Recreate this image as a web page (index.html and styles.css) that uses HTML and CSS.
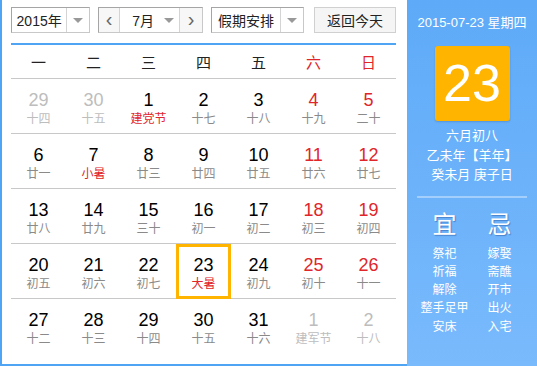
FILE: index.html
```html
<!DOCTYPE html>
<html lang="zh-CN">

<head>
    <meta charset="UTF-8">
    <title>万年历</title>
    <link rel="stylesheet" href="styles.css">
</head>

<body>
    <div class="calendar">
        <div class="cal-main">
            <div class="toolbar">
                <div class="select year-select">
                    <span class="select-text">2015年</span>
                    <span class="select-arrow"><i class="tri"></i></span>
                </div>
                <div class="select month-select">
                    <span class="nav-btn">&lsaquo;</span>
                    <span class="select-text">7月</span>
                    <span class="month-arrow"><i class="tri"></i></span>
                    <span class="nav-btn nav-next">&rsaquo;</span>
                </div>
                <div class="select holiday-select">
                    <span class="select-text">假期安排</span>
                    <span class="select-arrow"><i class="tri"></i></span>
                </div>
                <button class="today-btn">返回今天</button>
            </div>

            <div class="week-head">
                <span>一</span><span>二</span><span>三</span><span>四</span><span>五</span>
                <span class="weekend">六</span><span class="weekend">日</span>
            </div>

            <div class="days">
                <div class="day other"><b>29</b><small>十四</small></div>
                <div class="day other"><b>30</b><small>十五</small></div>
                <div class="day"><b>1</b><small class="festival">建党节</small></div>
                <div class="day"><b>2</b><small>十七</small></div>
                <div class="day"><b>3</b><small>十八</small></div>
                <div class="day weekend"><b>4</b><small>十九</small></div>
                <div class="day weekend"><b>5</b><small>二十</small></div>

                <div class="day"><b>6</b><small>廿一</small></div>
                <div class="day"><b>7</b><small class="festival">小暑</small></div>
                <div class="day"><b>8</b><small>廿三</small></div>
                <div class="day"><b>9</b><small>廿四</small></div>
                <div class="day"><b>10</b><small>廿五</small></div>
                <div class="day weekend"><b>11</b><small>廿六</small></div>
                <div class="day weekend"><b>12</b><small>廿七</small></div>

                <div class="day"><b>13</b><small>廿八</small></div>
                <div class="day"><b>14</b><small>廿九</small></div>
                <div class="day"><b>15</b><small>三十</small></div>
                <div class="day"><b>16</b><small>初一</small></div>
                <div class="day"><b>17</b><small>初二</small></div>
                <div class="day weekend"><b>18</b><small>初三</small></div>
                <div class="day weekend"><b>19</b><small>初四</small></div>

                <div class="day"><b>20</b><small>初五</small></div>
                <div class="day"><b>21</b><small>初六</small></div>
                <div class="day"><b>22</b><small>初七</small></div>
                <div class="day selected"><b>23</b><small class="festival">大暑</small></div>
                <div class="day"><b>24</b><small>初九</small></div>
                <div class="day weekend"><b>25</b><small>初十</small></div>
                <div class="day weekend"><b>26</b><small>十一</small></div>

                <div class="day last"><b>27</b><small>十二</small></div>
                <div class="day last"><b>28</b><small>十三</small></div>
                <div class="day last"><b>29</b><small>十四</small></div>
                <div class="day last"><b>30</b><small>十五</small></div>
                <div class="day last"><b>31</b><small>十六</small></div>
                <div class="day last other"><b>1</b><small>建军节</small></div>
                <div class="day last other"><b>2</b><small>十八</small></div>
            </div>
        </div>

        <div class="cal-side">
            <div class="side-date">2015-07-23 星期四</div>
            <div class="side-day">23</div>
            <div class="side-lunar">
                <p>六月初八</p>
                <p>乙未年【羊年】</p>
                <p>癸未月 庚子日</p>
            </div>
            <div class="side-line"></div>
            <div class="almanac">
                <div class="almanac-col">
                    <h3>宜</h3>
                    <p>祭祀</p>
                    <p>祈福</p>
                    <p>解除</p>
                    <p>整手足甲</p>
                    <p>安床</p>
                </div>
                <div class="almanac-col">
                    <h3>忌</h3>
                    <p>嫁娶</p>
                    <p>斋醮</p>
                    <p>开市</p>
                    <p>出火</p>
                    <p>入宅</p>
                </div>
            </div>
        </div>
    </div>
</body>

</html>
```

FILE: styles.css
```css
body {
    margin: 0;
    padding: 0;
    background-color: #ffffff;
    font-family: Arial, "Liberation Sans", "Noto Sans CJK SC", sans-serif;
}

.calendar {
    display: flex;
    width: 537px;
    height: 366px;
}

.cal-main {
    width: 385px;
    height: 357px;
    padding: 7px 11px 0 9px;
    border-left: 2px solid #4fa4f3;
    border-bottom: 2px solid #4fa4f3;
}

/* toolbar */
.toolbar {
    display: flex;
    height: 26px;
    padding-bottom: 10px;
    border-bottom: 2px solid #4fa4f3;
}

.select {
    display: flex;
    height: 26px;
    box-sizing: border-box;
    border: 1px solid #a5a5a5;
    border-right-color: #c8c8c8;
    border-bottom-color: #c8c8c8;
    margin-right: 8px;
    font-size: 14px;
    color: #222;
    background-color: #fff;
}

.select-text {
    display: flex;
    align-items: center;
    justify-content: center;
}

.select-arrow {
    width: 22px;
    border-left: 1px solid #d4d4d4;
    display: flex;
    align-items: center;
    justify-content: center;
}

.tri {
    width: 0;
    height: 0;
    border-left: 5px solid transparent;
    border-right: 5px solid transparent;
    border-top: 5px solid #999;
}

.year-select {
    width: 79px;
}

.year-select .select-text {
    width: 55px;
}

.month-select {
    width: 105px;
}

.nav-btn {
    width: 21px;
    display: flex;
    align-items: center;
    justify-content: center;
    font-size: 20px;
    color: #666;
    background-color: #f7f7f7;
    border-right: 1px solid #d4d4d4;
    line-height: 1;
    padding-bottom: 2px;
    box-sizing: border-box;
}

.nav-next {
    border-right: none;
    border-left: 1px solid #d4d4d4;
    width: 23px;
}

.month-select .select-text {
    width: 34px;
    justify-content: flex-end;
}

.month-arrow {
    width: 25px;
    display: flex;
    align-items: center;
    justify-content: center;
    padding-left: 4px;
    box-sizing: border-box;
}

.holiday-select {
    width: 93px;
    margin-right: 10px;
}

.holiday-select .select-text {
    width: 69px;
}

.today-btn {
    width: 82px;
    height: 26px;
    padding: 0;
    border: 1px solid #d0d0d0;
    background-color: #f5f5f5;
    font-family: Arial, "Liberation Sans", "Noto Sans CJK SC", sans-serif;
    font-size: 14px;
    color: #222;
}

/* week header */
.week-head {
    display: grid;
    grid-template-columns: repeat(7, 55px);
    height: 33px;
    border-bottom: 1px solid #c8c8c8;
    font-size: 15px;
    color: #222;
}

.week-head span {
    display: flex;
    align-items: center;
    justify-content: center;
}

.week-head .weekend {
    color: #e0262b;
}

/* days grid */
.days {
    display: grid;
    grid-template-columns: repeat(7, 55px);
    grid-auto-rows: 55px;
}

.day {
    display: flex;
    flex-direction: column;
    align-items: center;
    padding-top: 11px;
    box-sizing: border-box;
    border-bottom: 1px solid #c8c8c8;
}

.day.last {
    border-bottom: none;
}

.day b {
    font-weight: normal;
    font-size: 18px;
    line-height: 20px;
    color: #000;
}

.day small {
    font-size: 12px;
    line-height: 18px;
    color: #8a8a8a;
}

.day.weekend b {
    color: #e0262b;
}

.day small.festival {
    color: #e0262b;
}

.day.other b,
.day.other small {
    color: #bdbdbd;
}

.day.selected {
    border: 3px solid #ffb400;
    padding-top: 8px;
}

/* side panel */
.cal-side {
    width: 130px;
    background: linear-gradient(#5eaaf8, #79bafc);
    color: #fff;
    text-align: center;
}

.side-date {
    font-size: 13px;
    margin-top: 15px;
    line-height: 16px;
}

.side-day {
    width: 75px;
    height: 75px;
    margin: 15px auto 0;
    background-color: #ffb400;
    border-radius: 3px;
    box-shadow: 0 1px 2px rgba(0, 0, 0, 0.15);
    font-size: 52px;
    line-height: 75px;
}

.side-lunar {
    margin-top: 5px;
}

.side-lunar p {
    margin: 0;
    font-size: 13px;
    line-height: 19.5px;
}

.side-line {
    height: 2px;
    margin: 11px 10px 0;
    background-color: #a4cffc;
}

.almanac {
    display: flex;
    justify-content: center;
    margin-top: 12px;
}

.almanac-col {
    width: 55px;
}

.almanac-col h3 {
    margin: 0 0 5px;
    font-size: 24px;
    line-height: 30px;
    font-weight: normal;
    text-shadow: 1px 1px 1px rgba(0, 40, 120, 0.35);
}

.almanac-col p {
    margin: 0;
    font-size: 12px;
    line-height: 18.3px;
    white-space: nowrap;
}
```
